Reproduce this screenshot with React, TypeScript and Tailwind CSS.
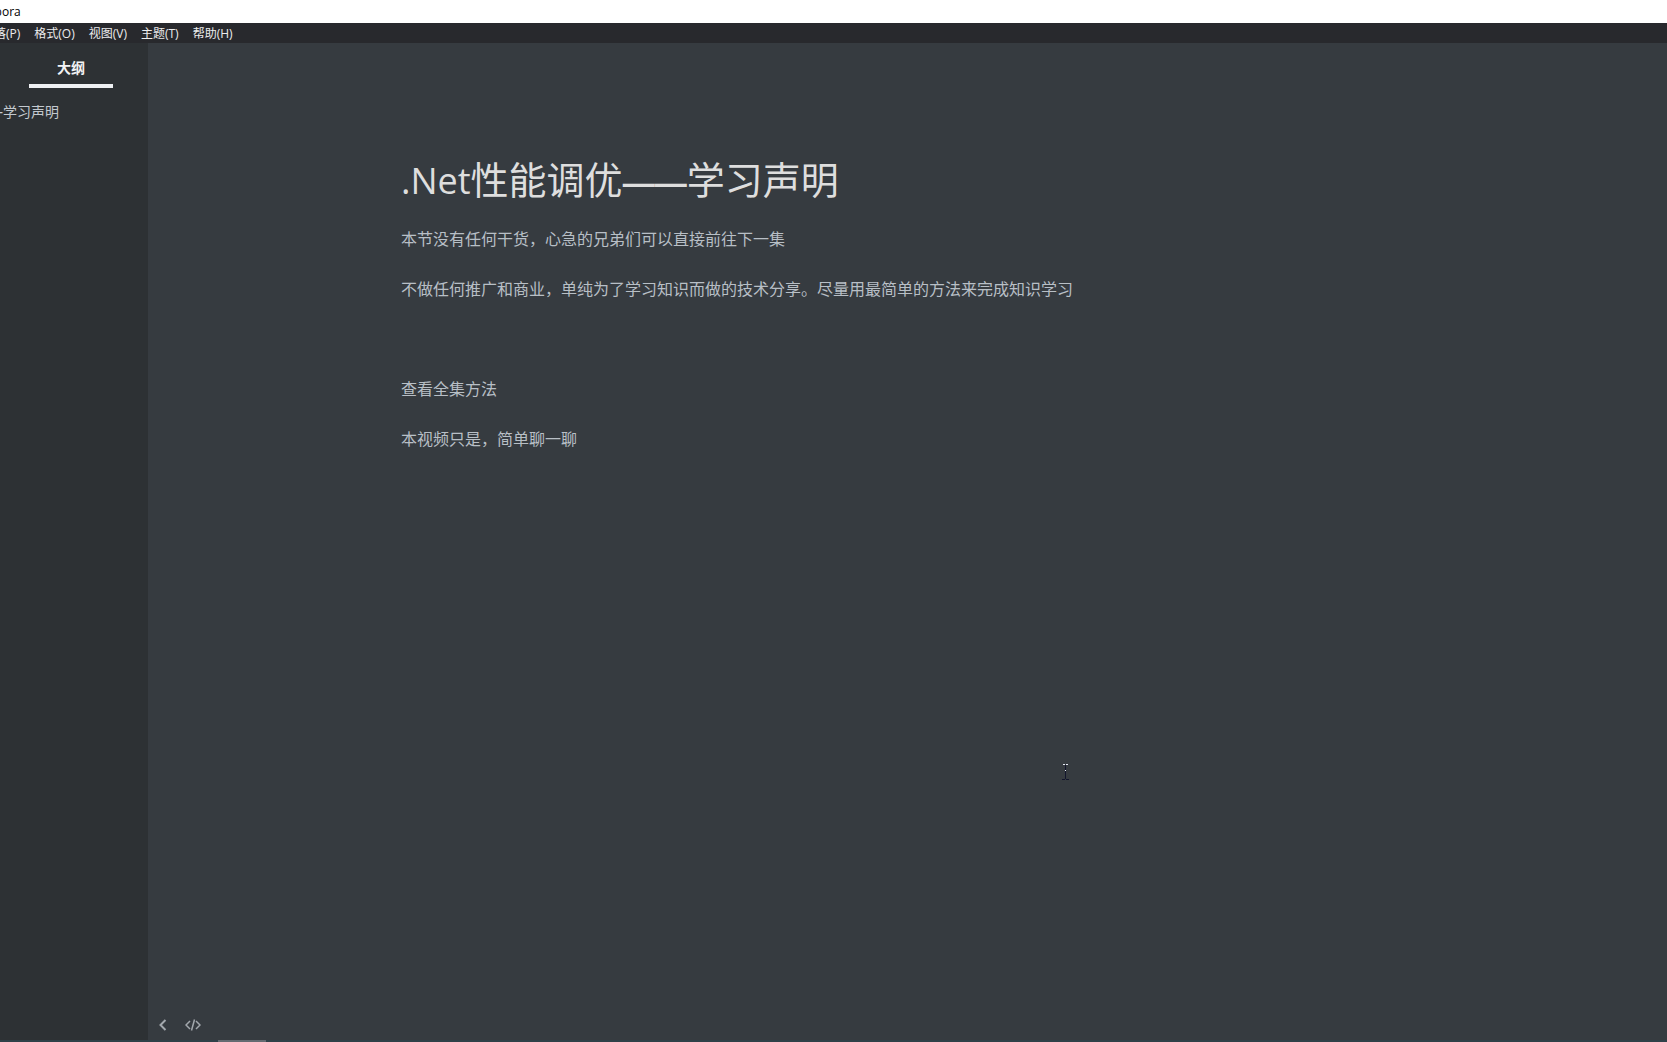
const menus = ['段落(P)', '格式(O)', '视图(V)', '主题(T)', '帮助(H)'];

const paragraphs = [
  '本节没有任何干货，心急的兄弟们可以直接前往下一集',
  '不做任何推广和商业，单纯为了学习知识而做的技术分享。尽量用最简单的方法来完成知识学习',
  '',
  '查看全集方法',
  '本视频只是，简单聊一聊',
];

function TitleBar() {
  return (
    <header className="flex h-[23px] shrink-0 items-center overflow-hidden bg-white text-xs whitespace-nowrap text-black">
      <span className="-ml-[18px]">Typora</span>
    </header>
  );
}

function MenuBar() {
  return (
    <nav aria-label="菜单" className="flex h-5 shrink-0 items-end overflow-hidden bg-[#28292d] text-xs leading-[18px] whitespace-nowrap text-[#ececee]">
      <div className="-ml-[18px] flex gap-3.5">
        {menus.map((m) => (
          <button key={m} type="button">{m}</button>
        ))}
      </div>
    </nav>
  );
}

function Sidebar() {
  return (
    <aside className="w-[148px] shrink-0 overflow-hidden bg-[#2d3134]">
      <div className="flex pl-[29px]">
        <button type="button" className="h-[45px] w-[84px] border-b-4 border-[#eef0f3] pt-2 text-sm font-bold text-[#f2f3f5]">
          大纲
        </button>
      </div>
      <div className="mt-3 flex w-full justify-end pr-[89px] text-sm leading-6 whitespace-nowrap text-[#c3c9cf]">
        <a href="#title">.Net性能调优——学习声明</a>
      </div>
    </aside>
  );
}

function Pointer() {
  return (
    <svg aria-hidden="true" className="absolute top-[720px] left-[913px]" width="9" height="18" viewBox="0 0 9 18" shapeRendering="crispEdges">
      <path d="M4 2h1v14H4zM1 16h3v1H1zM5 16h3v1H5z" fill="#12152c" />
      <path d="M2 1h2v1H2zM5 1h2v1H5zM4 7h1v1H4z" fill="#e4e8f4" />
    </svg>
  );
}

export default function App() {
  return (
    <div className="flex h-screen flex-col overflow-hidden bg-[#363b40] font-['Open_Sans','Noto_Sans_CJK_SC',sans-serif]">
      <TitleBar />
      <MenuBar />
      <div className="flex min-h-0 flex-1">
        <Sidebar />
        <main className="relative flex min-w-0 flex-1 flex-col">
          <article className="flex-1 pt-[110px] pl-[253px] text-[#b8bfc6]">
            <h1 id="title" className="h-[52px] text-[38px] leading-[52px] text-[#dedede]">
              <span className="text-4xl leading-none">.Net</span>性能调优<span className="font-['Liberation_Sans'] text-[32px] leading-none font-bold">——</span>学习声明
            </h1>
            <div className="mt-[22px] flex flex-col gap-[26px] text-base leading-6">
              {paragraphs.map((p, i) => (
                <p key={i} className="min-h-6">{p}</p>
              ))}
            </div>
          </article>
          <footer className="flex h-[30px] shrink-0 items-center gap-3.5 pl-[7px] text-[#a3a8ad]">
            <button type="button" aria-label="侧边栏" className="flex size-4 items-center justify-center">
              <svg width="8" height="12" viewBox="0 0 8 12" fill="none" stroke="currentColor" strokeWidth="2">
                <path d="M6.5 1 1.5 6l5 5" />
              </svg>
            </button>
            <button type="button" aria-label="源代码模式" className="flex size-4 items-center justify-center">
              <svg width="16" height="12" viewBox="0 0 16 12" fill="none" stroke="currentColor" strokeWidth="1.5">
                <path d="M5 2 1 6l4 4M11 2l4 4-4 4M9.5 .5l-3 11" />
              </svg>
            </button>
          </footer>
          <Pointer />
        </main>
      </div>
      <div className="flex h-0.5 shrink-0 bg-[#2f4149] pl-[218px]">
        <div className="w-12 bg-[#646b72]" />
      </div>
    </div>
  );
}
